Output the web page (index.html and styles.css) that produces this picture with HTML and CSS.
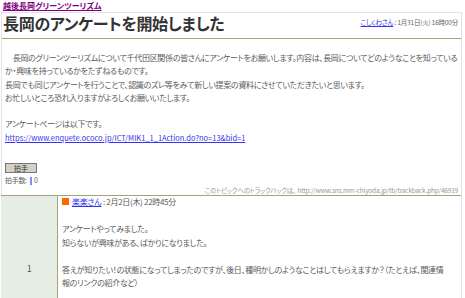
FILE: index.html
```html
<!DOCTYPE html>
<html lang="ja">
<head>
    <meta charset="UTF-8">
    <title>長岡のアンケートを開始しました</title>
    <link rel="stylesheet" href="styles.css">
</head>
<body>
    <a class="site-link" href="#">越後長岡グリーンツーリズム</a>
    <div class="topic">
        <div class="topic-head">
            <h1>長岡のアンケートを開始しました</h1>
            <div class="meta"><a href="#">こしくわさん</a> : 1月31日(火) 16時00分</div>
        </div>
        <div class="topic-body">
            <p>　長岡のグリーンツーリズムについて千代田区関係の皆さんにアンケートをお願いします。内容は、長岡についてどのようなことを知っているか・興味を持っているかをたずねるものです。<br>
            長岡でも同じアンケートを行うことで、認識のズレ等をみて新しい提案の資料にさせていただきたいと思います。<br>
            お忙しいところ恐れ入りますがよろしくお願いいたします。<br>
            <br>
            アンケートページは以下です。<br>
            <a class="url" href="#">https://www.enquete.ococo.jp/ICT/MIK1_1_1Action.do?no=13&amp;bid=1</a></p>
            <div class="clap">
                <button type="button">拍手</button>
                <div class="clap-count">拍手数: <span class="bar"></span>0</div>
            </div>
            <div class="trackback">このトピックへのトラックバックは、 http://www.sns.mm-chiyoda.jp/tb/trackback.php/46919</div>
        </div>
    </div>
    <table class="comments">
        <tr>
            <td class="num">1</td>
            <td class="comment">
                <div class="comment-head"><span class="mark"></span><a href="#">楽楽さん</a> : 2月2日(木) 22時45分</div>
                <p>アンケートやってみました。<br>
                知らないが興味がある、ばかりになりました。<br>
                <br>
                答えが知りたい！の状態になってしまったのですが、後日、種明かしのようなことはしてもらえますか？（たとえば、関連情報のリンクの紹介など）</p>
            </td>
        </tr>
    </table>
</body>
</html>
```

FILE: styles.css
```css
body {
    margin: 0;
    padding: 0 3px 0 1px;
    font-family: "Noto Sans CJK JP", sans-serif;
    font-feature-settings: "palt";
    color: #5a5a5a;
    font-size: 8px;
    letter-spacing: -0.3px;
    background: #fff;
}
a {
    color: #3333ee;
}
.site-link {
    display: block;
    margin-left: 2px;
    height: 12px;
    line-height: 12px;
    font-size: 8px;
    font-weight: bold;
    letter-spacing: 0;
    color: #800080;
}
.topic {
    border: 1px solid #eadcea;
    border-left-color: #e4e4e4;
    border-bottom: none;
}
.topic-head {
    display: flex;
    justify-content: space-between;
    align-items: flex-start;
    height: 25px;
    border-bottom: 1px solid #a3a37a;
}
.topic-head h1 {
    margin: 0 0 0 1px;
    font-size: 16px;
    letter-spacing: -0.3px;
    line-height: 20px;
    color: #333;
}
.meta {
    font-size: 6.5px;
    letter-spacing: -0.2px;
    margin: 4px 3px 0 0;
    color: #666;
}
.topic-body {
    padding: 12px 3px 0 3px;
}
.topic-body p {
    margin: 0;
    line-height: 13.3px;
}
.topic-body .url {
    font-size: 7.5px;
    letter-spacing: 0;
}
.clap {
    margin-top: 18px;
}
.clap button {
    font-family: inherit;
    font-size: 7px;
    padding: 0 8px;
    height: 10px;
    line-height: 8px;
    background: #d4d0c8;
    border: 1px solid #777;
    color: #333;
}
.clap-count {
    font-size: 7px;
    margin-top: 2px;
}
.clap-count .bar {
    display: inline-block;
    width: 2px;
    height: 8px;
    background: #8888ff;
    margin: 0 2px;
    vertical-align: middle;
}
.trackback {
    text-align: right;
    font-size: 6.5px;
    letter-spacing: -0.2px;
    color: #999;
}
.comments {
    width: 100%;
    border-collapse: collapse;
    border-top: 1px solid #a3a37a;
    border-right: 1px solid #eadcea;
}
.comments td {
    padding: 0;
    vertical-align: top;
}
.comments .num {
    width: 56px;
    background: #e6ede2;
    border-right: 1px solid #a3a37a;
    text-align: center;
    vertical-align: middle;
    font-size: 9px;
    height: 144px;
}
.comment {
    padding: 0 14px 0 4px !important;
}
.comment-head {
    font-size: 8px;
    line-height: 12px;
}
.comment-head .mark {
    display: inline-block;
    width: 7px;
    height: 7px;
    background: #ff6600;
    margin-right: 3px;
}
.comment p {
    margin: 14px 0 0 0;
    line-height: 13.5px;
}
```
